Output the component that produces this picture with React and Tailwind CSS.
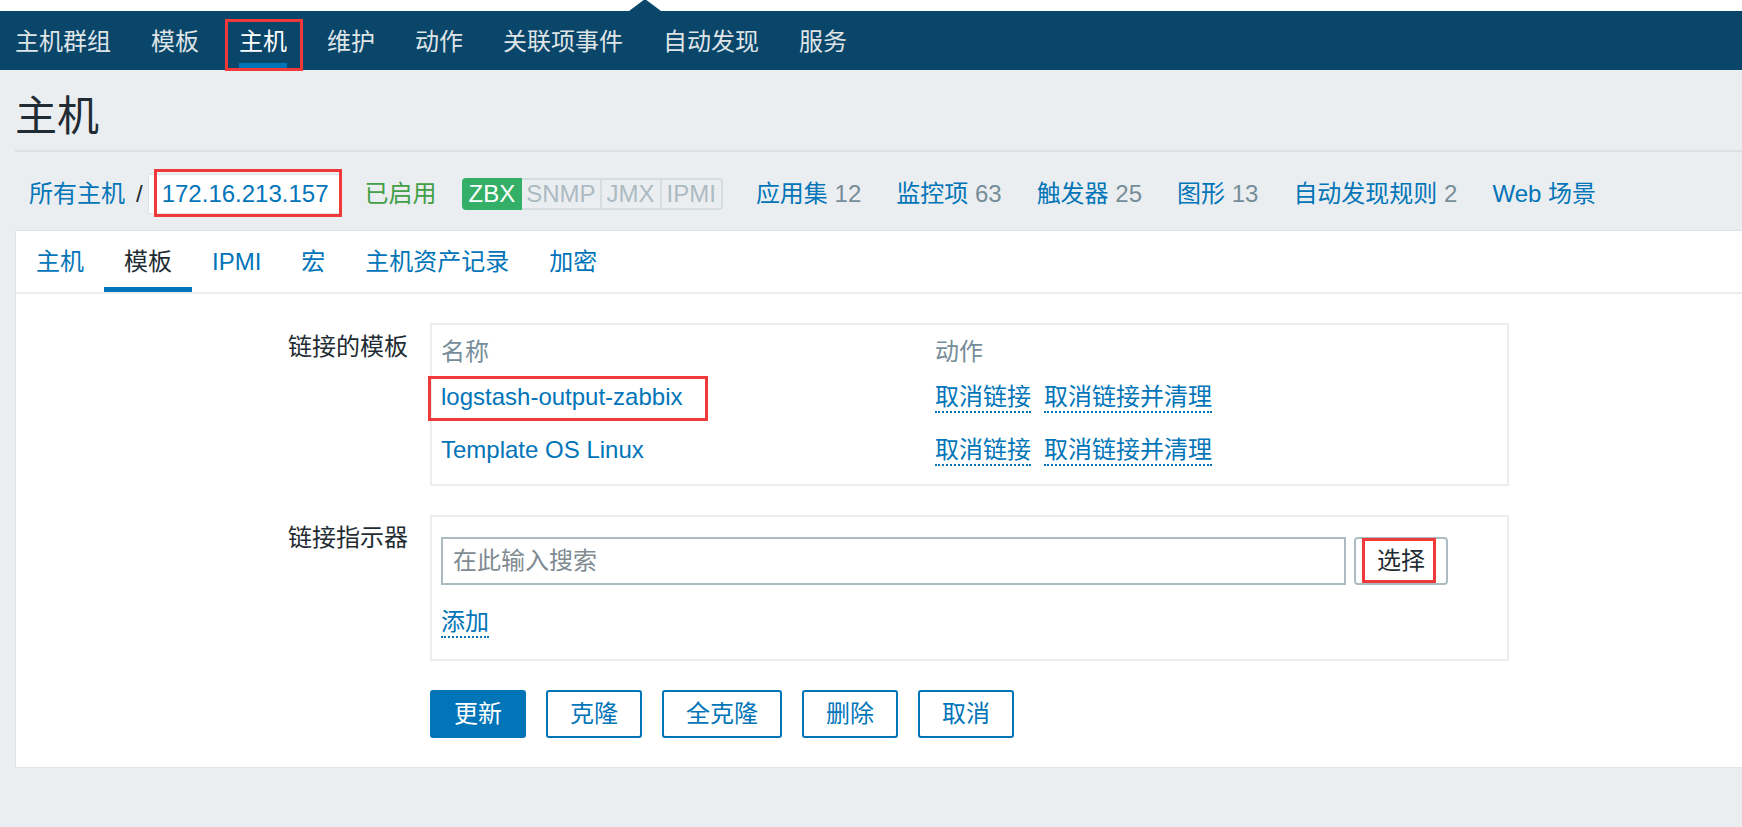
import React from 'react'

const navItems = ['主机群组', '模板', '主机', '维护', '动作', '关联项事件', '自动发现', '服务']
const tabs = ['主机', '模板', 'IPMI', '宏', '主机资产记录', '加密']
const hostLinks = [
  ['应用集', '12'],
  ['监控项', '63'],
  ['触发器', '25'],
  ['图形', '13'],
  ['自动发现规则', '2'],
  ['Web 场景', ''],
]
const templates = ['logstash-output-zabbix', 'Template OS Linux']

function DottedLink({ children, className = '' }) {
  return (
    <a href="#" className={`inline-block leading-[28px] text-[#0275b8] border-b-2 border-dotted border-[#0275b8] ${className}`}>
      {children}
    </a>
  )
}

export default function App() {
  return (
    <div className="min-h-screen w-full overflow-hidden bg-[#ebeef0] text-[24px] text-[#1f2c33] font-[family-name:Liberation_Sans,Noto_Sans_CJK_SC,sans-serif]">
      {/* strip above the menu */}
      <div className="relative h-[11px] bg-white">
        <div className="absolute left-[629px] bottom-0 w-0 h-0 border-l-[16px] border-r-[16px] border-b-[12px] border-l-transparent border-r-transparent border-b-[#0a466a]" />
      </div>

      {/* main menu */}
      <nav className="flex h-[59px] gap-[40px] bg-[#0a466a] pl-[15px]">
        {navItems.map((item) => {
          const active = item === '主机'
          return (
            <div key={item} className="relative flex h-full items-center pt-[3px]">
              <a href="#" className={`leading-[28px] ${active ? 'text-white' : 'text-[#dfe4e7]'}`}>{item}</a>
              {active && (
                <>
                  <span className="absolute left-0 right-0 top-[52px] h-[5px] bg-[#0275b8]" />
                  <span className="absolute left-[-14px] top-[8px] h-[52px] w-[78px] border-[3px] border-[#f03a3a]" />
                </>
              )}
            </div>
          )
        })}
      </nav>

      {/* title */}
      <div className="ml-[15px] border-b-2 border-[#dde1e4]">
        <h1 className="pt-[22px] pb-[8px] text-[42px] leading-[50px] font-normal">主机</h1>
      </div>

      {/* host navigation */}
      <div className="ml-[15px] flex h-[78px] items-center pt-[6px] pl-[14px] leading-[28px]">
        <a href="#" className="text-[#0275b8]">所有主机</a>
        <span className="ml-[11px] text-[#1f2c33]">/</span>
        <div className="relative ml-[5px] flex h-[40px] items-center rounded-[2px] border border-[#dfe4e7] bg-white pl-[13px] pr-[12px]">
          <a href="#" className="text-[#0275b8]">172.16.213.157</a>
          <span className="absolute left-[5px] top-[-6px] h-[48px] w-[188px] border-[3px] border-[#f03a3a]" />
        </div>
        <span className="ml-[23px] text-[#429e47]">已启用</span>
        <div className="ml-[25px] flex">
          <span className="rounded-l-[4px] border-2 border-[#34af67] bg-[#34af67] px-[5px] text-white">ZBX</span>
          <span className="border-2 border-l-0 border-[#d5dde1] bg-[#ebeef0] px-[4px] text-[#acbbc2]">SNMP</span>
          <span className="border-2 border-l-0 border-[#d5dde1] bg-[#ebeef0] px-[5px] text-[#acbbc2]">JMX</span>
          <span className="rounded-r-[4px] border-2 border-l-0 border-[#d5dde1] bg-[#ebeef0] px-[5px] text-[#acbbc2]">IPMI</span>
        </div>
        <div className="ml-[33px] flex gap-[35px]">
          {hostLinks.map(([name, count]) => (
            <span key={name}>
              <a href="#" className="text-[#0275b8]">{name}</a>
              {count && <span className="text-[#768d99]"> {count}</span>}
            </span>
          ))}
        </div>
      </div>

      {/* panel */}
      <div className="ml-[15px] border border-r-0 border-[#dfe4e7] bg-white pb-[29px]">
        <div className="flex h-[63px] border-b-2 border-[#ebeef0]">
          {tabs.map((tab) => {
            const active = tab === '模板'
            return (
              <div key={tab} className="relative flex h-[61px] items-center px-[20px]">
                <a href="#" className={`leading-[28px] ${active ? 'text-[#1f2c33]' : 'text-[#0275b8]'}`}>{tab}</a>
                {active && <span className="absolute bottom-0 left-0 right-0 h-[5px] bg-[#0275b8]" />}
              </div>
            )
          })}
        </div>

        {/* linked templates */}
        <div className="mt-[29px] flex">
          <div className="w-[392px] pt-[10px] text-right leading-[28px]">链接的模板</div>
          <div className="ml-[22px] w-[1079px] border-2 border-[#ebeef0] px-[9px] pt-[13px] pb-[18px]">
            <div className="flex leading-[28px] text-[#768d99]">
              <div className="w-[494px]">名称</div>
              <div>动作</div>
            </div>
            {templates.map((t, i) => (
              <div key={t} className={`flex items-start ${i === 0 ? 'mt-[17px]' : 'mt-[23px]'}`}>
                <div className="relative w-[494px] leading-[28px]">
                  <a href="#" className="text-[#0275b8]">{t}</a>
                  {i === 0 && <span className="absolute left-[-13px] top-[-7px] h-[45px] w-[280px] border-[3px] border-[#f03a3a]" />}
                </div>
                <div className="flex">
                  <DottedLink>取消链接</DottedLink>
                  <DottedLink className="ml-[13px]">取消链接并清理</DottedLink>
                </div>
              </div>
            ))}
          </div>
        </div>

        {/* link new templates */}
        <div className="mt-[29px] flex">
          <div className="w-[392px] pt-[9px] text-right leading-[28px]">链接指示器</div>
          <div className="ml-[22px] w-[1079px] border-2 border-[#ebeef0] px-[9px] pt-[20px] pb-[19px]">
            <div className="flex">
              <input
                type="text"
                placeholder="在此输入搜索"
                className="h-[48px] w-[905px] border-2 border-[#acbbc2] bg-white px-[10px] text-[24px] outline-none placeholder:text-[#7f8a91]"
              />
              <button className="relative ml-[8px] h-[48px] w-[94px] rounded-[4px] border-2 border-[#acbbc2] bg-white text-[#1f2c33]">
                选择
                <span className="absolute left-[6px] top-[-1px] h-[45px] w-[74px] border-[3px] border-[#f03a3a]" />
              </button>
            </div>
            <div className="mt-[19px]">
              <DottedLink>添加</DottedLink>
            </div>
          </div>
        </div>

        {/* form buttons */}
        <div className="mt-[29px] flex gap-[20px] pl-[414px]">
          <button className="h-[48px] rounded-[3px] border-2 border-[#0275b8] bg-[#0275b8] px-[22px] text-white">更新</button>
          {['克隆', '全克隆', '删除', '取消'].map((b) => (
            <button key={b} className="h-[48px] rounded-[3px] border-2 border-[#0275b8] bg-white px-[22px] text-[#0275b8]">{b}</button>
          ))}
        </div>
      </div>
    </div>
  )
}
